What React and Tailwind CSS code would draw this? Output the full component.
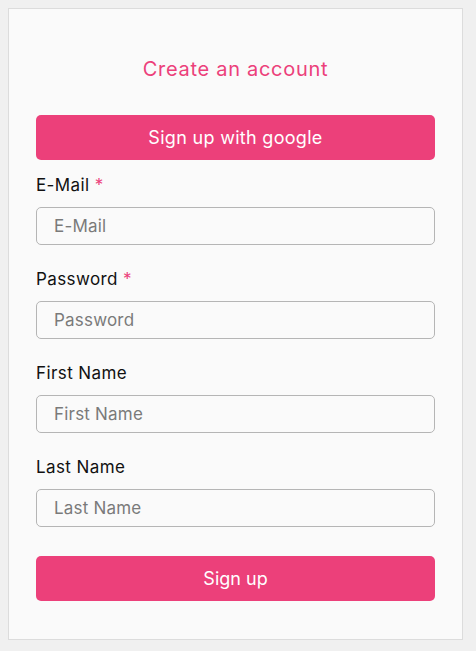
import React from 'react';

const Field = ({ label, placeholder, required, type = 'text' }) => (
    <div className="flex flex-col">
        <label className="text-[17px] leading-[24px] tracking-[0.4px] text-[#111]">
            {label}
            {required && <span className="text-[#ec407a]"> *</span>}
        </label>
        <input
            type={type}
            placeholder={placeholder}
            className="mt-[10px] h-[38px] w-full rounded-[5px] border border-[#b5b5b5] bg-white/0 px-[17px] text-[17px] tracking-[0.2px] text-[#333] placeholder:text-[#7a7a7a] outline-none"
        />
    </div>
);

export default function App() {
    return (
        <div className="min-h-[651px] bg-[#f0f0f0] p-2" style={{ fontFamily: 'Inter, "Open Sans", sans-serif' }}>
            <div className="w-[455px] border border-[#dcdcdc] bg-[#fafafa] px-[27px] pt-[46px] pb-[38px]">
                <h1 className="text-center text-[20px] leading-[28px] tracking-[0.7px] text-[#ec407a]">Create an account</h1>

                <button className="mt-[32px] h-[45px] w-full rounded-[5px] bg-[#ec407a] text-[18px] tracking-[0.3px] text-white">
                    Sign up with google
                </button>

                <div className="mt-[13px] flex flex-col gap-[22px]">
                    <Field label="E-Mail" placeholder="E-Mail" required type="email" />
                    <Field label="Password" placeholder="Password" required type="password" />
                    <Field label="First Name" placeholder="First Name" />
                    <Field label="Last Name" placeholder="Last Name" />
                </div>

                <button className="mt-[29px] h-[45px] w-full rounded-[5px] bg-[#ec407a] text-[18px] text-white">
                    Sign up
                </button>
            </div>
        </div>
    );
}
